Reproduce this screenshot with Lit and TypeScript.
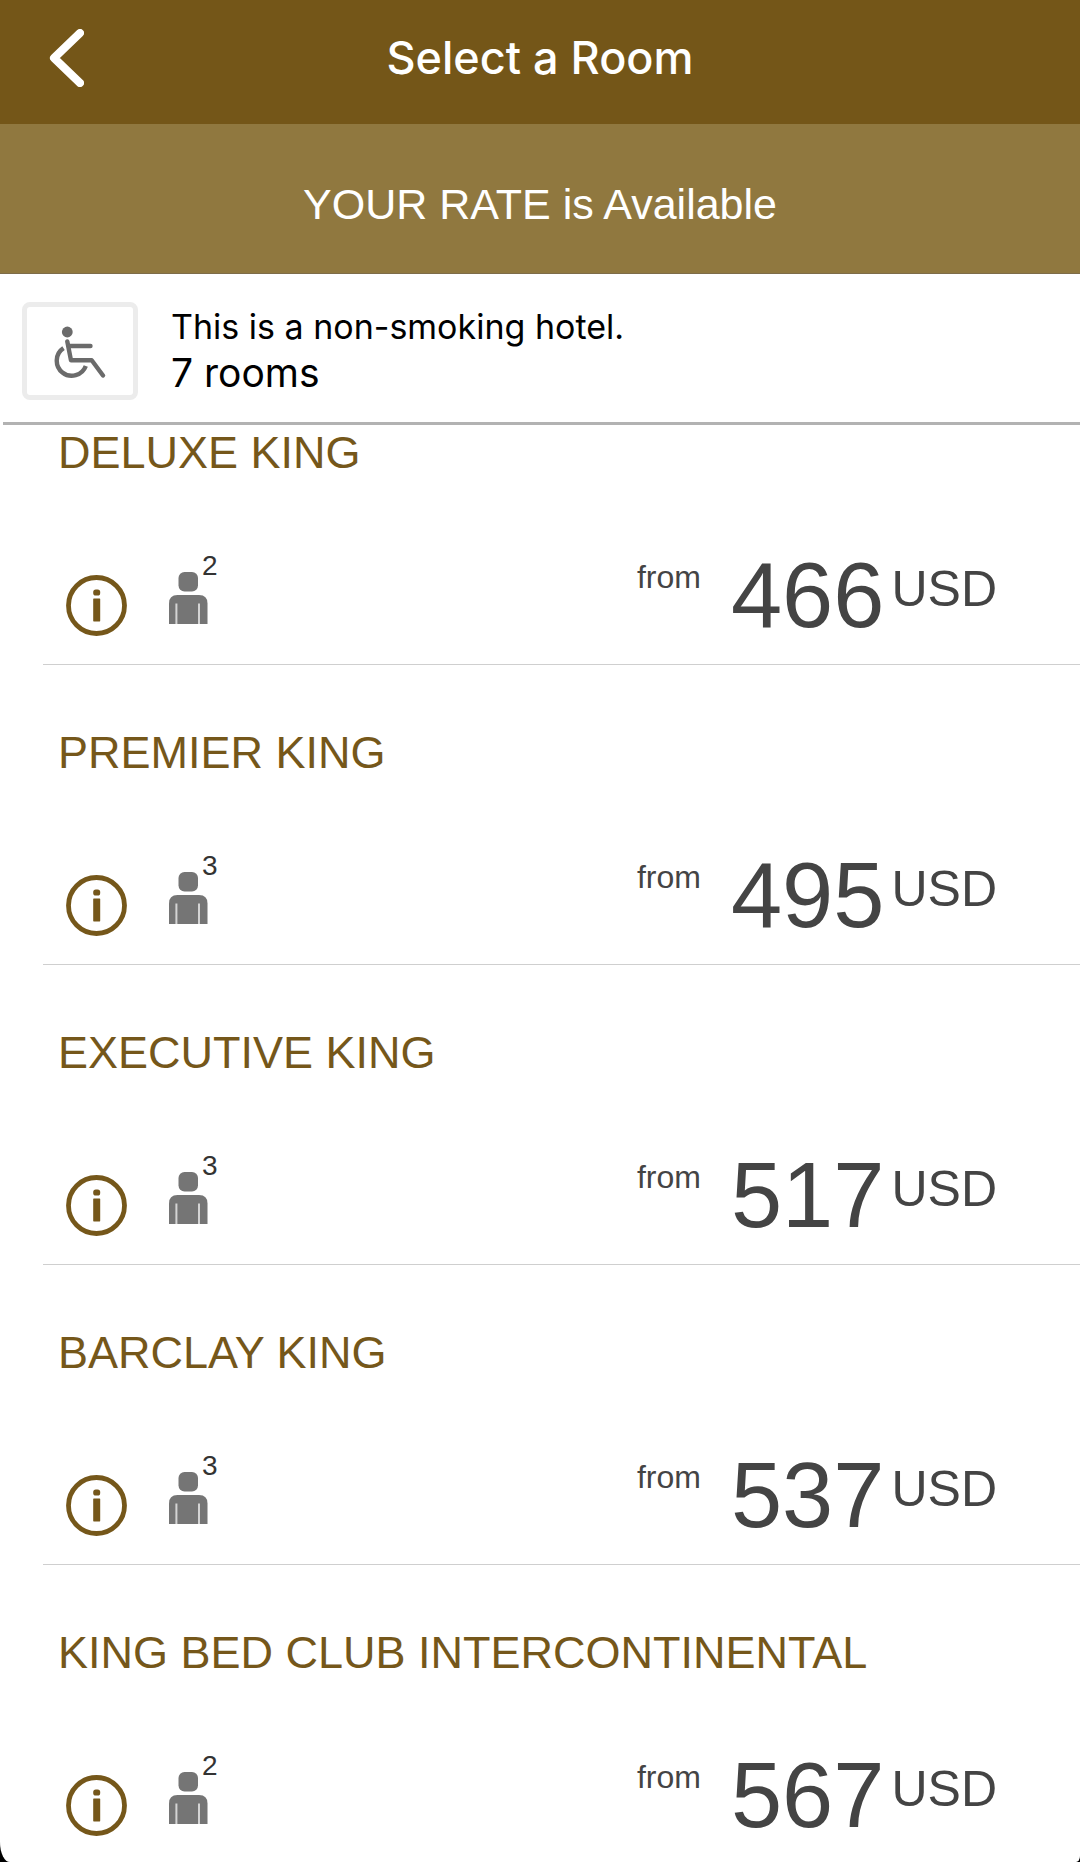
import { LitElement, html, css } from "lit";
import { customElement, property } from "lit/decorators.js";

interface Room {
  name: string;
  guests: number;
  price: number;
}

const ROOMS: Room[] = [
  { name: "DELUXE KING", guests: 2, price: 466 },
  { name: "PREMIER KING", guests: 3, price: 495 },
  { name: "EXECUTIVE KING", guests: 3, price: 517 },
  { name: "BARCLAY KING", guests: 3, price: 537 },
  { name: "KING BED CLUB INTERCONTINENTAL", guests: 2, price: 567 },
];

@customElement("room-card")
export class RoomCard extends LitElement {
  @property({ attribute: false }) room!: Room;

  static styles = css`
    :host {
      display: block;
      font-family: "Liberation Sans", Arial, sans-serif;
      color: #444;
    }
    .name {
      margin: 0 0 70px;
      font-size: 45px;
      line-height: 52px;
      font-weight: 400;
      color: #75571a;
    }
    .details {
      display: flex;
      align-items: flex-start;
      min-height: 115px;
      padding: 0 83px 0 8px;
    }
    .info {
      margin: 26px 41px 0 0;
      padding: 0;
      border: 0;
      background: none;
      color: #75571a;
      cursor: pointer;
    }
    .icon {
      display: block;
    }
    .guests {
      position: relative;
      padding-top: 23px;
      color: #757575;
    }
    .count {
      position: absolute;
      top: 1px;
      left: 33px;
      font-size: 28px;
      line-height: 32px;
      color: #333;
    }
    .rate {
      display: flex;
      align-items: flex-start;
      margin: 0 0 0 auto;
    }
    .from {
      padding-top: 10px;
      margin-right: 30px;
      font-size: 32px;
      line-height: 36px;
    }
    .price {
      font-size: 92px;
      line-height: 92px;
    }
    .currency {
      padding-top: 10px;
      margin-left: 7px;
      font-size: 50px;
      line-height: 60px;
    }
  `;

  render() {
    const { name, guests, price } = this.room;
    return html`
      <h2 class="name">${name}</h2>
      <div class="details">
        <button class="info" type="button" aria-label="Room details">
          <svg class="icon" width="62" height="62" viewBox="0 0 62 62" aria-hidden="true">
            <circle cx="30.500" cy="30.500" r="28" fill="none" stroke="currentColor" stroke-width="4.800" />
            <rect x="27.200" y="14.500" width="7" height="6" rx="2.600" fill="currentColor" />
            <rect x="27.200" y="23.400" width="7" height="23" rx="0.600" fill="currentColor" />
          </svg>
        </button>
        <div class="guests">
          <svg class="icon" width="39" height="52" viewBox="0 0 39 52" aria-hidden="true">
            <rect x="9.500" y="0" width="19.500" height="19.500" rx="6" fill="currentColor" />
            <path d="M0 52V31.500Q0 23 8.500 23H30Q38.500 23 38.500 31.500V52Z" fill="currentColor" />
            <path d="M7.400 31.500V52M30 31.500V52" stroke="#d4d4d4" stroke-width="2" />
          </svg>
          <span class="count">${guests}</span>
        </div>
        <p class="rate">
          <span class="from">from</span>
          <span class="price">${price}</span>
          <span class="currency">USD</span>
        </p>
      </div>
    `;
  }
}

@customElement("app-root")
export class AppRoot extends LitElement {
  static styles = css`
    :host {
      display: block;
      background: #000;
      font-family: Inter, "Liberation Sans", sans-serif;
      color: #000;
    }
    .page {
      min-height: 100vh;
      box-sizing: border-box;
      overflow: hidden;
      background: #fff;
      border-radius: 0 0 4px 10px / 0 0 6px 20px;
    }
    .bar {
      display: grid;
      grid-template-columns: 100px 1fr 100px;
      align-items: start;
      padding-bottom: 37px;
      background: #745618;
      color: #fff;
    }
    .back {
      justify-self: end;
      margin: 29px 16px 0 0;
      padding: 0;
      border: 0;
      background: none;
      color: inherit;
      cursor: pointer;
    }
    .icon {
      display: block;
    }
    .title {
      margin: 32px 0 0;
      font-size: 45px;
      line-height: 52px;
      font-weight: 500;
      text-align: center;
    }
    .banner {
      margin: 0;
      padding: 54px 20px 43px;
      border-bottom: 1px solid #7d6c49;
      background: #90783f;
      color: #fff;
      font-family: "Liberation Sans", Arial, sans-serif;
      font-size: 43px;
      line-height: 52px;
      text-align: center;
    }
    .notice {
      display: flex;
      align-items: center;
      gap: 33px;
      padding: 28px 22px 22px;
    }
    .access {
      display: grid;
      place-items: center;
      width: 116px;
      height: 98px;
      padding: 0;
      border: 5px solid #ececec;
      border-radius: 8px;
      background: #fff;
      color: #6b6b6b;
      cursor: pointer;
    }
    .smoking,
    .total {
      margin: 0;
    }
    .smoking {
      font-size: 34px;
      line-height: 40px;
    }
    .total {
      margin-top: 4px;
      font-size: 39px;
      line-height: 44px;
    }
    .rooms {
      margin: 0;
      padding: 0;
      list-style: none;
    }
    .divider {
      height: 3px;
      margin: 0 0 0 3px;
      border: 0;
      background: #b2b2b2;
    }
    .row {
      margin-left: 43px;
      padding: 62px 0 0 15px;
      border-bottom: 1px solid #cfcfcf;
    }
    .row:first-child {
      padding-top: 2px;
    }
    .row:last-child {
      border-bottom: 0;
      margin-bottom: -3px;
    }
  `;

  render() {
    return html`
      <main class="page">
        <header class="bar">
          <button class="back" type="button" aria-label="Back">
            <svg class="icon" width="35" height="58" viewBox="0 0 35 58" aria-hidden="true">
              <path d="M31 4L5 29L31 54" fill="none" stroke="currentColor" stroke-width="8"
                stroke-linecap="round" stroke-linejoin="round" />
            </svg>
          </button>
          <h1 class="title">Select a Room</h1>
        </header>
        <p class="banner">YOUR RATE is Available</p>
        <section class="notice">
          <button class="access" type="button" aria-label="Accessible rooms">
            <svg class="icon" width="52" height="54" viewBox="54 324 52 54" aria-hidden="true"
              fill="none" stroke="currentColor" stroke-width="4.400" stroke-linecap="round" stroke-linejoin="round">
              <circle cx="67.300" cy="332" r="5.400" fill="currentColor" stroke="none" />
              <path d="M67.300 341.500L71 360.300H91.700L103 375.500" />
              <path d="M69 346H90.500" />
              <path d="M63.500 348.200A15 15 0 1 0 85.800 366" stroke-linecap="butt" />
            </svg>
          </button>
          <div>
            <p class="smoking">This is a non-smoking hotel.</p>
            <p class="total">7 rooms</p>
          </div>
        </section>
        <hr class="divider" />
        <ul class="rooms">
          ${ROOMS.map(
            (room) => html`<li class="row"><room-card .room=${room}></room-card></li>`
          )}
        </ul>
      </main>
    `;
  }
}
